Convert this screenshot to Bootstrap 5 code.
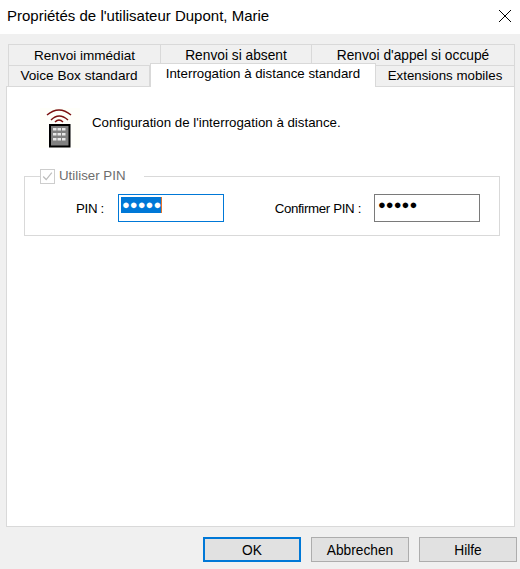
<!DOCTYPE html>
<html lang="fr">
  <head>
    <meta charset="UTF-8" />
    <meta name="viewport" content="width=device-width, initial-scale=1" />
    <title>Propriétés de l'utilisateur</title>
    <link href="https://cdn.jsdelivr.net/npm/bootstrap@5.3.0/dist/css/bootstrap.min.css" rel="stylesheet" />
    <style>
      html, body { height: 569px; overflow: hidden; }
      body { background: #f0f0f0; font-family: "Liberation Sans", Arial, sans-serif; font-size: 13.3px; color: #000; line-height: 16px; }
      .dlg-title { height: 34px; background: #fff; padding: 0 0 2px 7px; font-size: 15px; }
      .dlg-close { width: 14px; height: 14px; margin-right: 8px; }
      .dlg-body { padding: 10px 5px 0 6px; height: 492px; }
      .tab-row { flex-wrap: nowrap; }
      .tab-back { height: 21px; padding: 0; margin-left: 2px; background: #f0f0f0; border: 1px solid #d9d9d9; border-bottom: 0; color: #000; }
      .tab-row-top .tab-back { border-right: 0; margin-left: 0; font-size: 13.75px; padding-top: 1px; }
      .tab-row-top .tab-back:first-child { margin-left: 2px; font-size: 13.55px; }
      .tab-row-top .tab-back:last-child { border-right: 1px solid #d9d9d9; }
      .tab-w1 { width: 152px; }
      .tab-w2 { width: 151px; }
      .tab-w3 { width: 204px; }
      .tab-w4 { width: 142px; font-size: 13.6px; }
      .tab-w5 { width: 226px; }
      .tab-w6 { width: 139px; margin-left: 0; border-left: 0; }
      .tab-active { height: 24px; margin: -2px 0 -1px; padding-bottom: 4px; background: #fff; border: 1px solid #d9d9d9; border-bottom: 0; position: relative; z-index: 1; }
      .tab-panel { height: 441px; background: #fff; border: 1px solid #d9d9d9; padding: 21px 14px 0 17px; }
      .intro-icon { width: 40px; height: 40px; margin-right: 12px; }
      .intro-row { height: 40px; padding-left: 16px; }
      .intro-text { margin-bottom: 10px; }
      .pin-group { position: relative; height: 60px; margin-top: 28px; border: 1px solid #d9d9d9; padding: 17px 19px 0 0; }
      .pin-legend { position: absolute; left: 15px; top: -9px; background: #fff; padding-right: 18px; color: #6d6d6d; height: 16px; }
      .pin-check { width: 15px; height: 15px; margin-right: 4px; border: 1px solid #cdcdcd; }
      .pin-label { width: 93px; text-align: right; padding: 1px 14px 0 0; line-height: 28px; letter-spacing: -0.3px; }
      .pin-label-2 { width: 150px; padding: 1px 13px 0 0; text-align: right; line-height: 28px; letter-spacing: -0.35px; }
      .pin-field { width: 106px; height: 28px; background: #fff; border: 1px solid #7a7a7a; padding: 2px 0 0 2px; line-height: 16px; font-size: 13px; }
      .pin-field-focus { border-color: #0078d7; }
      .pin-sel { background: #0078d7; color: #fff; display: inline-block; height: 16px; padding-left: 1px; border-right: 1px solid #e0742c; }
      .pin-dots { padding-left: 1px; }
      .dlg-foot { gap: 10px; padding: 11px 3px 0 0; }
      .dlg-btn { width: 98px; height: 25px; padding: 2px 0 0; background: #e1e1e1; border: 1px solid #adadad; border-radius: 0; font-size: 13.75px; line-height: 1; color: #000; }
      .dlg-btn-default { border: 2px solid #0078d7; }
    </style>
  </head>
  <body>
    <div class="dlg-title d-flex align-items-center justify-content-between">
      <span>Propriétés de l'utilisateur Dupont, Marie</span>
      <svg class="dlg-close" viewBox="0 0 14 14" fill="none" stroke="#000" stroke-width="1"><path d="M1 1 13 13M13 1 1 13" /></svg>
    </div>

    <div class="dlg-body">
      <div class="nav tab-row tab-row-top">
        <div class="tab-back tab-w1 d-flex align-items-center justify-content-center">Renvoi immédiat</div>
        <div class="tab-back tab-w2 d-flex align-items-center justify-content-center">Renvoi si absent</div>
        <div class="tab-back tab-w3 d-flex align-items-center justify-content-center">Renvoi d'appel si occupé</div>
      </div>
      <div class="nav tab-row">
        <div class="tab-back tab-w4 d-flex align-items-center justify-content-center">Voice Box standard</div>
        <div class="tab-active tab-w5 d-flex align-items-center justify-content-center">Interrogation à distance standard</div>
        <div class="tab-back tab-w6 d-flex align-items-center justify-content-center">Extensions mobiles</div>
      </div>
      <div class="tab-panel">
        <div class="intro-row d-flex align-items-center">
          <svg class="intro-icon" viewBox="0 0 40 40">
            <rect width="40" height="40" fill="#fffffa" />
            <g fill="none" stroke="#7a1010" stroke-width="1.5">
              <path d="M7 7Q19 -3 31 7" />
              <path d="M11 12Q19 4 28 12" />
              <path d="M15 14Q19 10 23 14" />
            </g>
            <rect x="10" y="17" width="19.5" height="21.5" fill="#808080" stroke="#000" stroke-width="2" />
            <g fill="#e8e8e8">
              <rect x="13" y="20" width="3.5" height="2.5" /><rect x="17.5" y="20" width="3.5" height="2.5" /><rect x="22" y="20" width="3.5" height="2.5" />
              <rect x="13" y="25" width="3.5" height="2.5" /><rect x="17.5" y="25" width="3.5" height="2.5" /><rect x="22" y="25" width="3.5" height="2.5" />
              <rect x="13" y="30" width="3.5" height="2.5" /><rect x="17.5" y="30" width="3.5" height="2.5" /><rect x="22" y="30" width="3.5" height="2.5" />
            </g>
          </svg>
          <span class="intro-text">Configuration de l'interrogation à distance.</span>
        </div>

        <div class="pin-group d-flex align-items-start">
          <div class="pin-legend d-flex align-items-center">
            <svg class="pin-check" viewBox="0 0 15 15" fill="none" stroke="#bdbdbd" stroke-width="1.4"><path d="M2.5 7.5 6 11 12.5 3" /></svg>
            <span>Utiliser PIN</span>
          </div>
          <label class="pin-label mb-0">PIN :</label>
          <div class="pin-field pin-field-focus"><span class="pin-sel">●●●●●</span></div>
          <label class="pin-label-2 mb-0">Confirmer PIN :</label>
          <div class="pin-field"><span class="pin-dots">●●●●●</span></div>
        </div>
      </div>
    </div>

    <div class="dlg-foot d-flex justify-content-end">
      <button type="button" class="btn dlg-btn dlg-btn-default">OK</button>
      <button type="button" class="btn dlg-btn">Abbrechen</button>
      <button type="button" class="btn dlg-btn">Hilfe</button>
    </div>

    <script src="https://cdn.jsdelivr.net/npm/bootstrap@5.3.0/dist/js/bootstrap.bundle.min.js"></script>
  </body>
</html>
